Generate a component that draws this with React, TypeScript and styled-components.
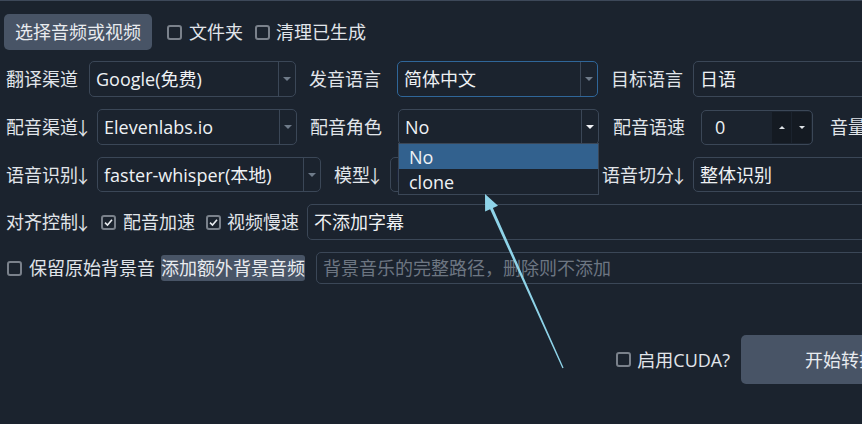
import React from 'react';
import styled, { createGlobalStyle } from 'styled-components';

const Global = createGlobalStyle`
  html, body { margin: 0; padding: 0; background: #1b232e; }
  body { font-family: "Open Sans", "Noto Sans CJK SC", sans-serif; }
  * { box-sizing: border-box; }
`;

const Page = styled.div`
  position: relative;
  width: 862px;
  height: 424px;
  overflow: hidden;
  background: #1b232e;
  border-top: 1px solid #3d4859;
  padding-top: 13px;
  display: flex;
  flex-direction: column;
  font-size: 18px;
  color: #e3e7ec;
`;

const Row = styled.div<{ $h: number; $mt?: number; $pl?: number; $end?: boolean }>`
  display: flex;
  align-items: center;
  flex-shrink: 0;
  height: ${(p) => p.$h}px;
  margin-top: ${(p) => p.$mt ?? 0}px;
  padding-left: ${(p) => p.$pl ?? 6}px;
  justify-content: ${(p) => (p.$end ? 'flex-end' : 'flex-start')};
  white-space: nowrap;
`;

const Label = styled.span<{ $ml?: number; $w?: number }>`
  flex-shrink: 0;
  display: inline-flex;
  align-items: center;
  margin-left: ${(p) => p.$ml ?? 0}px;
  width: ${(p) => (p.$w ? `${p.$w}px` : 'auto')};
  line-height: 1;
  color: #e1e5ea;
`;

const DownMark = styled.span`
  display: inline-block;
  font-family: "Noto Sans CJK SC", sans-serif;
  font-size: 18px;
  line-height: 1;
  width: 9px;
  overflow: visible;
  text-indent: -4px;
`;

const Combo = styled.div<{ $w: number; $ml?: number; $focus?: boolean }>`
  position: relative;
  flex-shrink: 0;
  display: flex;
  width: ${(p) => p.$w}px;
  height: 100%;
  margin-left: ${(p) => p.$ml ?? 0}px;
  border: 1px solid ${(p) => (p.$focus ? '#2f6699' : '#3b4757')};
  border-radius: 5px;
  background: #1b232e;
`;

const ComboText = styled.div<{ $muted?: boolean }>`
  flex: 1;
  display: flex;
  align-items: center;
  padding-left: 6px;
  line-height: 1;
  color: ${(p) => (p.$muted ? '#6d7682' : '#eef1f4')};
  overflow: hidden;
`;

const ComboArrow = styled.div<{ $active?: boolean }>`
  width: 17px;
  flex-shrink: 0;
  border-left: 1px solid #3b4757;
  display: flex;
  align-items: center;
  justify-content: center;
  &::after {
    content: '';
    border-left: 4px solid transparent;
    border-right: 4px solid transparent;
    border-top: 4px solid ${(p) => (p.$active ? '#f2f4f7' : '#6f7b89')};
  }
`;

const Popup = styled.div`
  position: absolute;
  left: -1px;
  top: 33px;
  width: 201px;
  background: #1b232e;
  border: 1px solid #3b4757;
  z-index: 5;
  display: flex;
  flex-direction: column;
`;

const PopupItem = styled.div<{ $sel?: boolean }>`
  height: 25px;
  display: flex;
  align-items: center;
  padding-left: 10px;
  line-height: 1;
  color: #eef1f4;
  background: ${(p) => (p.$sel ? '#32618e' : 'transparent')};
`;

const Spin = styled.div<{ $ml?: number }>`
  flex-shrink: 0;
  display: flex;
  width: 112px;
  height: 35px;
  margin-left: ${(p) => p.$ml ?? 0}px;
  border: 1px solid #3b4757;
  border-radius: 5px;
  padding: 1px 1px 1px 0;
`;

const SpinValue = styled.div`
  flex: 1;
  display: flex;
  align-items: center;
  padding-left: 13px;
  line-height: 1;
  color: #eef1f4;
`;

const SpinBtn = styled.div<{ $up?: boolean }>`
  width: 19px;
  margin-left: 1px;
  background: #141a22;
  display: flex;
  align-items: center;
  justify-content: center;
  &::after {
    content: '';
    border-left: 3px solid transparent;
    border-right: 3px solid transparent;
    ${(p) => (p.$up ? 'border-bottom: 3px solid #dfe3e8;' : 'border-top: 3px solid #dfe3e8;')}
  }
`;

const Button = styled.div<{ $w: number; $h: number; $ml?: number; $mr?: number; $r?: number }>`
  flex-shrink: 0;
  width: ${(p) => p.$w}px;
  height: ${(p) => p.$h}px;
  margin-left: ${(p) => p.$ml ?? 0}px;
  margin-right: ${(p) => p.$mr ?? 0}px;
  background: #485466;
  border-radius: ${(p) => p.$r ?? 5}px;
  display: flex;
  align-items: center;
  justify-content: center;
  line-height: 1;
  color: #e8ebef;
`;

const CheckWrap = styled.span<{ $ml?: number; $gap?: number }>`
  flex-shrink: 0;
  display: inline-flex;
  align-items: center;
  gap: ${(p) => p.$gap ?? 7}px;
  margin-left: ${(p) => p.$ml ?? 0}px;
  line-height: 1;
  color: #e1e5ea;
`;

const Box = styled.span`
  flex-shrink: 0;
  width: 15px;
  height: 15px;
  border: 2px solid #7a818b;
  border-radius: 3px;
  display: inline-flex;
  align-items: center;
  justify-content: center;
`;

const Overlay = styled.svg`
  position: absolute;
  left: 0;
  top: 0;
  pointer-events: none;
  z-index: 10;
`;

const Check: React.FC<{ label: string; checked?: boolean; ml?: number; gap?: number }> = ({ label, checked, ml, gap }) => (
  <CheckWrap $ml={ml} $gap={gap}>
    <Box>
      {checked && (
        <svg width="11" height="11" viewBox="0 0 11 11">
          <path d="M2 5.6 L4.5 8.1 L9 2.8" fill="none" stroke="#e8ebef" strokeWidth="1.6" />
        </svg>
      )}
    </Box>
    {label}
  </CheckWrap>
);

const Down = () => <DownMark>↓</DownMark>;

export default function App() {
  return (
    <Page>
      <Global />
      <Row $h={36} $pl={4}>
        <Button $w={148} $h={36}>选择音频或视频</Button>
        <Check label="文件夹" ml={15} />
        <Check label="清理已生成" ml={12} gap={6} />
      </Row>

      <Row $h={36} $mt={11}>
        <Label $w={70}>翻译渠道</Label>
        <Combo $w={207} $ml={13}>
          <ComboText>Google(免费)</ComboText>
          <ComboArrow />
        </Combo>
        <Label $w={75} $ml={13}>发音语言</Label>
        <Combo $w={201} $ml={13} $focus>
          <ComboText>简体中文</ComboText>
          <ComboArrow />
        </Combo>
        <Label $w={69} $ml={13}>目标语言</Label>
        <Combo $w={220} $ml={13}>
          <ComboText>日语</ComboText>
          <ComboArrow />
        </Combo>
      </Row>

      <Row $h={36} $mt={12}>
        <Label $w={78}>配音渠道<Down /></Label>
        <Combo $w={200} $ml={13}>
          <ComboText>Elevenlabs.io</ComboText>
          <ComboArrow />
        </Combo>
        <Label $w={75} $ml={13}>配音角色</Label>
        <Combo $w={201} $ml={13}>
          <ComboText>No</ComboText>
          <ComboArrow $active />
          <Popup>
            <PopupItem $sel>No</PopupItem>
            <PopupItem>clone</PopupItem>
          </Popup>
        </Combo>
        <Label $w={76} $ml={14}>配音语速</Label>
        <Spin $ml={12}>
          <SpinValue>0</SpinValue>
          <SpinBtn $up />
          <SpinBtn />
        </Spin>
        <Label $ml={17}>音量</Label>
      </Row>

      <Row $h={35} $mt={12}>
        <Label $w={78}>语音识别<Down /></Label>
        <Combo $w={224} $ml={13}>
          <ComboText>faster-whisper(本地)</ComboText>
          <ComboArrow />
        </Combo>
        <Label $w={43} $ml={13}>模型<Down /></Label>
        <Combo $w={199} $ml={13}>
          <ComboText>large-v2</ComboText>
          <ComboArrow />
        </Combo>
        <Label $w={78} $ml={13}>语音切分<Down /></Label>
        <Combo $w={220} $ml={13}>
          <ComboText>整体识别</ComboText>
          <ComboArrow />
        </Combo>
      </Row>

      <Row $h={36} $mt={12}>
        <Label $w={78}>对齐控制<Down /></Label>
        <Check label="配音加速" checked ml={17} />
        <Check label="视频慢速" checked ml={11} gap={6} />
        <Combo $w={600} $ml={8}>
          <ComboText>不添加字幕</ComboText>
        </Combo>
      </Row>

      <Row $h={32} $mt={12} $pl={7}>
        <Check label="保留原始背景音" />
        <Button $w={144} $h={26} $ml={6} $r={3}>添加额外背景音频</Button>
        <Combo $w={600} $ml={11}>
          <ComboText $muted>背景音乐的完整路径，删除则不添加</ComboText>
        </Combo>
      </Row>

      <Row $h={49} $mt={51} $end>
        <Check label="启用CUDA?" gap={6} />
        <Button $w={200} $h={49} $ml={11} $mr={-79}>开始转换</Button>
      </Row>

      <Overlay width="862" height="424" viewBox="0 0 862 424">
        <polygon
          points="485,193 498,204.7 492.9,207 563.6,366.8 562.4,367.2 490.1,208.2 485.1,210.5"
          fill="#8ed3e8"
        />
      </Overlay>
    </Page>
  );
}
